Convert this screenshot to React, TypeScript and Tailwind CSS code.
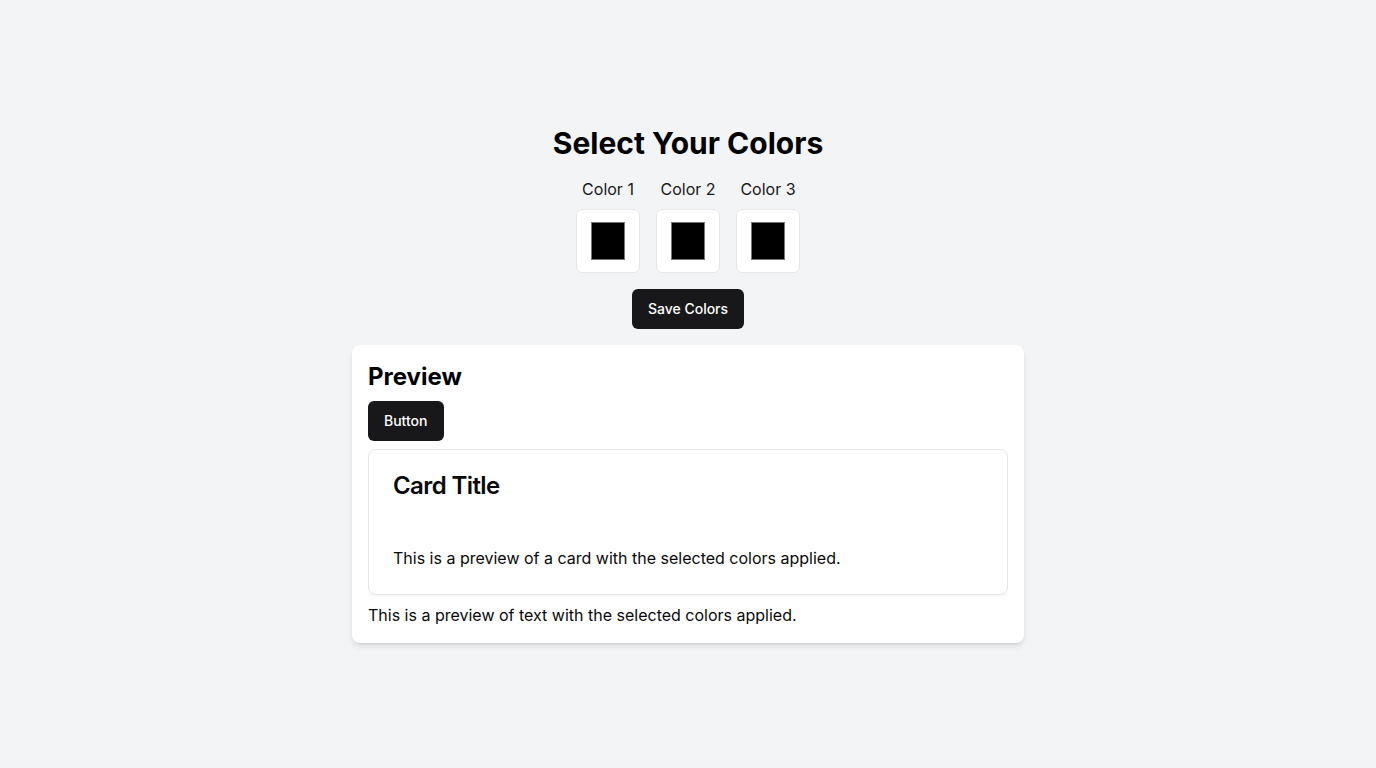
import React, { useState } from 'react';

export default function App() {
  const [colors, setColors] = useState(['#000000', '#000000', '#000000']);

  const update = (i: number, v: string) => {
    const next = [...colors];
    next[i] = v;
    setColors(next);
  };

  return (
    <div className="min-h-screen flex items-center justify-center bg-gray-100 text-zinc-950 font-['Inter',sans-serif]">
      <div className="flex flex-col items-center gap-4 w-full max-w-2xl">
        <h1 className="text-3xl font-bold text-black">Select Your Colors</h1>
        <div className="flex gap-4">
          {colors.map((c, i) => (
            <div key={i} className="flex flex-col items-center gap-2">
              <label className="text-base text-zinc-900">Color {i + 1}</label>
              <input
                type="color"
                value={c}
                onChange={(e) => update(i, e.target.value)}
                className="h-16 w-16 rounded-md border border-gray-200 bg-white px-3 py-2 cursor-pointer"
              />
            </div>
          ))}
        </div>
        <button className="h-10 px-4 rounded-md bg-zinc-900 text-white text-sm font-medium">Save Colors</button>
        <div className="w-full bg-white rounded-lg shadow-md p-4">
          <h2 className="text-2xl font-bold text-black">Preview</h2>
          <button className="mt-2 h-10 px-4 rounded-md bg-zinc-900 text-white text-sm font-medium">Button</button>
          <div className="mt-2 rounded-lg border border-gray-200 bg-white shadow-xs">
            <div className="flex flex-col p-6">
              <h3 className="text-2xl font-semibold leading-none tracking-tight">Card Title</h3>
            </div>
            <div className="px-6 pb-6 pt-6">
              <p className="text-base">This is a preview of a card with the selected colors applied.</p>
            </div>
          </div>
          <p className="mt-2 text-base">This is a preview of text with the selected colors applied.</p>
        </div>
      </div>
    </div>
  );
}
